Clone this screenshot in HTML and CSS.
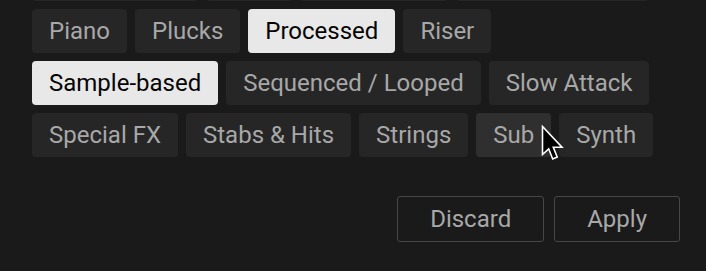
FILE: index.html
```html
<!DOCTYPE html>
<html>
<head>
<meta charset="utf-8">
<link rel="stylesheet" href="styles.css">
</head>
<body>
<div class="panel">
  <div class="chips">
    <span class="chip hidden w1"></span>
    <span class="chip hidden w2"></span>
    <span class="chip hidden w3"></span>
    <span class="chip hidden w4"></span>
    <span class="chip">Piano</span>
    <span class="chip">Plucks</span>
    <span class="chip selected">Processed</span>
    <span class="chip">Riser</span>
    <span class="chip selected">Sample-based</span>
    <span class="chip">Sequenced / Looped</span>
    <span class="chip">Slow Attack</span>
    <span class="chip">Special FX</span>
    <span class="chip">Stabs &amp; Hits</span>
    <span class="chip">Strings</span>
    <span class="chip hover">Sub
      <svg class="cursor" width="26" height="38" viewBox="0 0 26 38">
        <path d="M1.5 1.5 L1.5 29.5 L7.7 23.8 L11.7 34 L16.2 32 L12.3 22.3 L21 22.3 Z" fill="#000" stroke="#fff" stroke-width="1.6" stroke-linejoin="miter"/>
      </svg>
    </span>
    <span class="chip">Synth</span>
  </div>
  <div class="actions">
    <button class="btn">Discard</button>
    <button class="btn">Apply</button>
  </div>
</div>
</body>
</html>
```

FILE: styles.css
```css
html, body {
  margin: 0;
  padding: 0;
  background: #1a1a1a;
  overflow: hidden;
}

.panel {
  width: 648px;
  padding-left: 32px;
  font-family: Roboto, "Liberation Sans", sans-serif;
}

.chips {
  display: flex;
  flex-wrap: wrap;
  gap: 8px;
  margin-top: -43px;
}

.chip {
  position: relative;
  height: 44px;
  line-height: 44px;
  padding: 0 17px;
  background: #262626;
  color: #a8a8a8;
  font-size: 24px;
  border-radius: 4px;
  white-space: nowrap;
}

.chip.hidden {
  padding: 0;
}

.w1 { width: 166px; }
.w2 { width: 86px; }
.w3 { width: 148px; }
.w4 { width: 193px; }

.chip.selected {
  background: #e8e8e8;
  color: #050505;
}

.chip.hover {
  background: #2f2f2f;
}

.cursor {
  position: absolute;
  left: 65px;
  top: 12px;
  z-index: 2;
}

.actions {
  display: flex;
  justify-content: flex-end;
  gap: 10px;
  margin-top: 39px;
}

.btn {
  height: 46px;
  padding: 0 32px;
  background: transparent;
  border: 1.5px solid #474747;
  border-radius: 3px;
  color: #a8a8a8;
  font-family: Roboto, "Liberation Sans", sans-serif;
  font-size: 24px;
  line-height: 44px;
}
```
